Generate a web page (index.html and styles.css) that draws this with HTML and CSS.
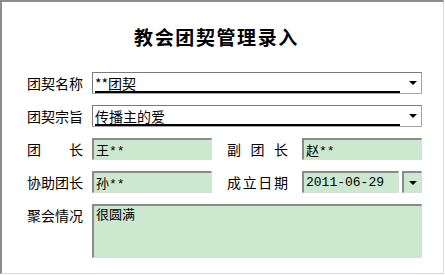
FILE: index.html
```html
<!DOCTYPE html>
<html lang="zh-CN">
<head>
    <meta charset="UTF-8">
    <title>教会团契管理录入</title>
    <link rel="stylesheet" href="styles.css">
</head>
<body>
    <div class="frame">
        <h1 class="title">教会团契管理录入</h1>

        <div class="form">
            <!-- 团契名称 -->
            <label class="label">团契名称</label>
            <div class="combo wide">
                <span class="combo-text">**团契</span>
                <span class="arrow"></span>
            </div>

            <!-- 团契宗旨 -->
            <label class="label">团契宗旨</label>
            <div class="combo wide">
                <span class="combo-text">传播主的爱</span>
                <span class="arrow"></span>
            </div>

            <!-- 团长 / 副团长 -->
            <label class="label spread"><span>团</span><span>长</span></label>
            <input class="field" type="text" value="王**">
            <label class="label second spread"><span>副</span><span>团</span><span>长</span></label>
            <input class="field" type="text" value="赵**">

            <!-- 协助团长 / 成立日期 -->
            <label class="label">协助团长</label>
            <input class="field" type="text" value="孙**">
            <label class="label second spread"><span>成</span><span>立</span><span>日</span><span>期</span></label>
            <div class="date">
                <input class="field date-input" type="text" value="2011-06-29">
                <span class="date-btn"><span class="arrow"></span></span>
            </div>

            <!-- 聚会情况 -->
            <label class="label top">聚会情况</label>
            <textarea class="field notes wide">很圆满</textarea>
        </div>
    </div>
</body>
</html>
```

FILE: styles.css
```css
body {
    margin: 0;
    background: #fff;
    font-family: "Noto Sans CJK SC", "DejaVu Sans", sans-serif;
    color: #000;
}
.frame {
    box-sizing: border-box;
    width: 444px;
    height: 274px;
    border-top: 2px solid #8c8c8c;
    border-left: 2px solid #8c8c8c;
    border-right: 1px solid #d8d8d8;
    border-bottom: 1px solid #d8d8d8;
}
.title {
    margin: 21px 12px 0 0;
    height: 28px;
    line-height: 28px;
    font-size: 19px;
    font-weight: 700;
    letter-spacing: 1.6px;
    text-align: center;
}
.form {
    display: grid;
    grid-template-columns: 65px 120px 90px 120px;
    grid-template-rows: 22px 22px 22px 22px 54px;
    row-gap: 11px;
    margin: 21px 0 0 25px;
}
.label {
    width: 56px;
    font-size: 14px;
    line-height: 22px;
    white-space: nowrap;
}
.label.second {
    margin-left: 15px;
    width: 61px;
}
.spread {
    display: flex;
    justify-content: space-between;
}
.top {
    align-self: start;
}
.wide {
    grid-column: 2 / 5;
}
.combo {
    box-sizing: border-box;
    display: flex;
    align-items: center;
    padding: 0 4px 0 2px;
    background: #fff;
    border: 1px solid #a6a6a6;
    border-top-color: #7a7a7a;
    border-left-color: #7a7a7a;
}
.combo-text {
    flex: 1;
    margin: 1px 9px 0 0;
    font-size: 14px;
    line-height: 16px;
    border-bottom: 2px solid #000;
}
.arrow {
    width: 0;
    height: 0;
    border-left: 4px solid transparent;
    border-right: 4px solid transparent;
    border-top: 4px solid #000;
}
.field {
    box-sizing: border-box;
    width: 100%;
    min-width: 0;
    height: 100%;
    margin: 0;
    padding: 0 2px;
    font-family: "Liberation Mono", "Noto Sans CJK SC", monospace;
    font-size: 13px;
    color: #000;
    background: #cce8cf;
    border-style: solid;
    border-width: 2px 1px 1px 2px;
    border-color: #8a8a8a #dcdcdc #dcdcdc #8a8a8a;
    outline: none;
}
.date {
    display: flex;
    gap: 3px;
    min-width: 0;
}
.date-input {
    flex: 1;
    width: auto;
}
.date-btn {
    box-sizing: border-box;
    flex: 0 0 20px;
    display: flex;
    align-items: center;
    justify-content: center;
    background: #cce8cf;
    border-style: solid;
    border-width: 2px 1px 1px 2px;
    border-color: #8a8a8a #dcdcdc #dcdcdc #8a8a8a;
}
.notes {
    padding: 2px 2px;
    resize: none;
    line-height: 16px;
}
```
